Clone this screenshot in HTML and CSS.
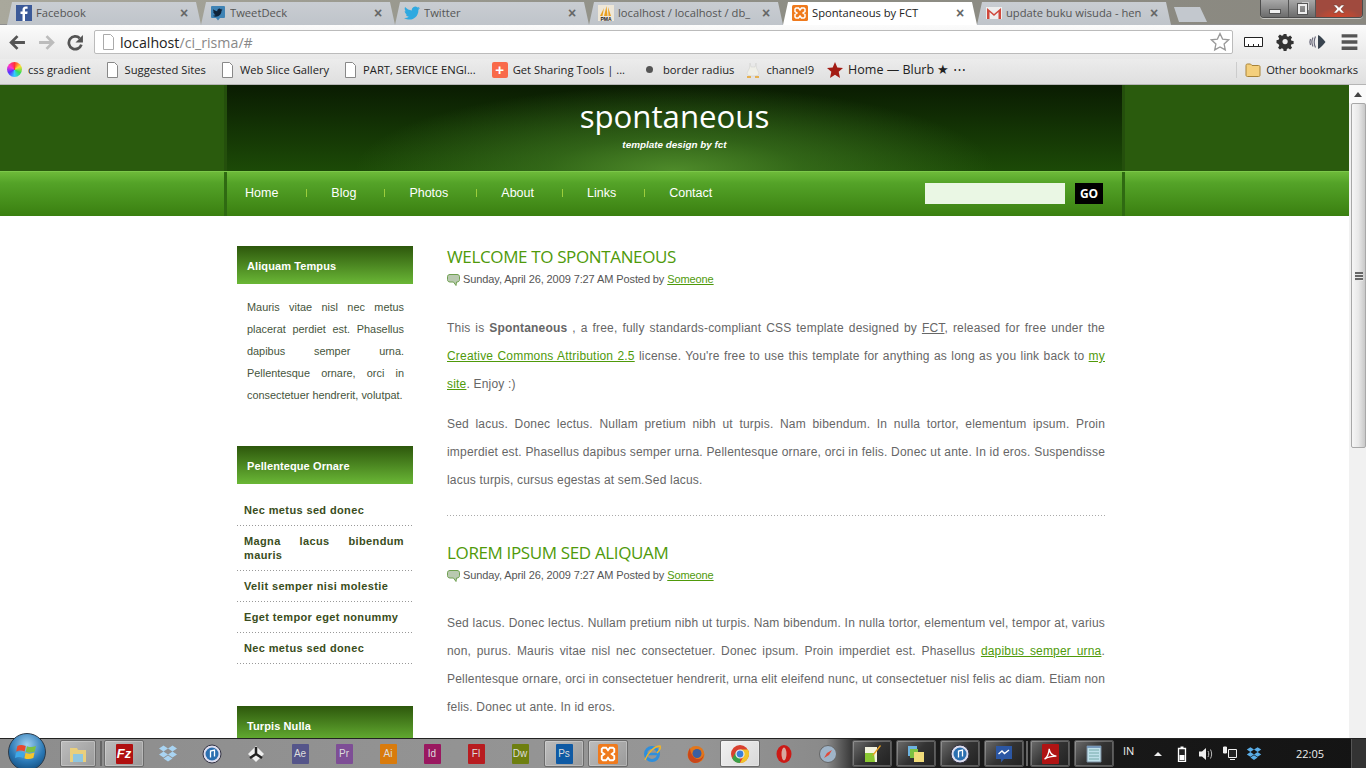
FILE: index.html
```html
<!DOCTYPE html>
<html lang="en">
<head>
    <meta charset="UTF-8">
    <title>Spontaneous by FCT</title>
    <link rel="stylesheet" href="styles.css">
</head>
<body>
<div class="screen">
    <div class="tabstrip">
        <div class="tab">
            <svg class="favicon" viewBox="0 0 16 16"><rect width="16" height="16" fill="#3b5998"/><path d="M9 16V9h2.300l.3-2.500H9V5c0-.8.300-1.200 1.200-1.200h1.400V1.500H9.800C7.500 1.500 6.500 2.800 6.500 4.700v1.800H4.500V9h2v7z" fill="#fff"/></svg>
            <span class="tab-title">Facebook</span><span class="tab-x">&#215;</span>
        </div>
        <div class="tab">
            <svg class="favicon" viewBox="0 0 16 16"><path d="M2 1h12a1 1 0 0 1 1 1v10a1 1 0 0 1-1 1h-4l-2 2.500L6 13H2a1 1 0 0 1-1-1V2a1 1 0 0 1 1-1z" fill="#3f83b5"/><path d="M12.500 4.500c-.5.200-.9.300-1.300.3.400-.3.700-.6.800-1-.4.200-.8.400-1.300.5A2 2 0 0 0 7.300 6.200C5.700 6.100 4.300 5.300 3.400 4.200c-.5.900-.2 2 .6 2.600-.3 0-.6-.1-.9-.2 0 1 .7 1.800 1.600 2-.3.100-.6.100-.9 0 .3.800 1 1.300 1.900 1.400-.9.600-2 .9-3 .8 3.900 2.200 8.800.1 8.800-5 .4-.3.800-.8 1-1.300z" fill="#10243a"/></svg>
            <span class="tab-title">TweetDeck</span><span class="tab-x">&#215;</span>
        </div>
        <div class="tab">
            <svg class="favicon" viewBox="0 0 16 16"><path d="M16 3c-.6.300-1.200.4-1.900.5.700-.4 1.200-1 1.400-1.800-.6.400-1.300.7-2 .8A3.300 3.300 0 0 0 7.900 5.500C5.200 5.400 2.800 4.100 1.100 2.100.3 3.600.7 5.500 2.200 6.500c-.5 0-1-.2-1.500-.4 0 1.600 1.100 3 2.600 3.300-.5.100-1 .1-1.500 0 .4 1.300 1.600 2.200 3.100 2.300A6.600 6.600 0 0 1 0 13c6.700 3.800 14.500.2 14.400-8.200.6-.5 1.200-1.100 1.600-1.800z" fill="#2fa9e0"/></svg>
            <span class="tab-title">Twitter</span><span class="tab-x">&#215;</span>
        </div>
        <div class="tab">
            <svg class="favicon" viewBox="0 0 16 16"><rect width="16" height="16" fill="#eee7d8"/><path d="M6 11 8.500 1l1 10zM10.500 11 10 2l3 9zM2 11l4-8-1.500 8z" fill="#e8a020"/><text class="pma" x="8" y="15.500">PMA</text></svg>
            <span class="tab-title">localhost / localhost / db_</span><span class="tab-x">&#215;</span>
        </div>
        <div class="tab tab-active">
            <svg class="favicon" viewBox="0 0 16 16"><rect width="16" height="16" rx="1.500" fill="#ef7a1d"/><path d="M4 3h2.500L8 5l1.500-2H12l1 1v2.500L11 8l2 1.500V12l-1 1H9.500L8 11l-1.500 2H4l-1-1V9.500L5 8 3 6.500V4z" fill="none" stroke="#fff" stroke-width="1.500"/></svg>
            <span class="tab-title">Spontaneous by FCT</span><span class="tab-x">&#215;</span>
        </div>
        <div class="tab">
            <svg class="favicon" viewBox="0 0 16 16"><rect y="2" width="16" height="12" fill="#eee"/><path d="M1 14V3l7 6 7-6v11h-2.500V7L8 11 3.500 7v7z" fill="#d0483c"/></svg>
            <span class="tab-title">update buku wisuda - hen</span><span class="tab-x">&#215;</span>
        </div>
        <div class="tab-new"></div>
        <div class="window-btns">
            <span class="win-btn win-min"><i></i></span>
            <span class="win-btn win-max"><i></i></span>
            <span class="win-btn win-close"><svg viewBox="0 0 14 10"><path d="M1.500 1h3L7 3.500 9.500 1h3L9 5l3.500 4h-3L7 6.500 4.500 9h-3L5 5z" fill="#fff" stroke="#6b3a30" stroke-width=".5"/></svg></span>
        </div>
    </div>

    <div class="toolbar">
        <svg class="tool-icon" viewBox="0 0 16 16"><path d="M8 2 2 8l6 6M2.500 8H15" fill="none" stroke="#555" stroke-width="2.600"/></svg>
        <svg class="tool-icon" viewBox="0 0 16 16"><path d="M8 2l6 6-6 6M13.500 8H1" fill="none" stroke="#bcbcbc" stroke-width="2.600"/></svg>
        <svg class="tool-icon" viewBox="0 0 16 16"><path d="M13.500 10A6 6 0 1 1 12 4" fill="none" stroke="#555" stroke-width="2.600"/><path d="M15 1v7H8z" fill="#555"/></svg>
        <div class="omnibox">
            <svg class="page-icon" viewBox="0 0 13 16"><path d="M1.500.5h7l3 3v12h-10z" fill="#fff" stroke="#aaa"/></svg>
            <span class="url"><span class="url-host">localhost</span>/ci_risma/#</span>
            <svg class="star" viewBox="0 0 20 20"><path d="M10 1.500l2.600 5.600 6 .7-4.500 4.100 1.200 6L10 15l-5.300 2.900 1.200-6L1.400 7.800l6-.7z" fill="#fff" stroke="#999" stroke-width="1.300"/></svg>
        </div>
        <div class="tool-right">
            <svg class="tool-icon" viewBox="0 0 19 18"><path d="M.5 4.500h18v9H.5z" fill="#fff" stroke="#222"/><path d="M4.500 13.500v-2.500M9.500 13.500v-2.500M14.500 13.500v-2.500" stroke="#222"/></svg>
            <svg class="tool-icon" viewBox="0 0 18 18"><path d="M7.500 1h3l.4 2.300 1.500.7 2-1.300 2 2-1.300 2 .7 1.500 2.200.3v3l-2.200.4-.7 1.500 1.300 2-2 2-2-1.300-1.500.7-.4 2.200h-3l-.4-2.200-1.500-.7-2 1.300-2-2 1.300-2-.7-1.500L0 10.500v-3l2.200-.3.700-1.500-1.300-2 2-2 2 1.300 1.500-.7z" fill="#333" transform="scale(.95)"/><circle cx="8.600" cy="8.600" r="2.600" fill="#eee"/></svg>
            <svg class="tool-icon" viewBox="0 0 18 18"><path d="M9.500 2c2.500 1 5 4 7.500 7-2.500 3-5 6-7.500 7z" fill="#39444f"/><path d="M7 3.500C5.300 7 5.300 11 7 14.500M4.500 4.500C3 7.500 3 10.500 4.500 13.500M2 6c-.8 2-.8 4 0 6" fill="none" stroke="#667" stroke-width="1.200"/></svg>
            <svg class="tool-icon" viewBox="0 0 16 16"><path d="M1 1h14v3H1zM1 6.500h14v3H1zM1 12h14v3H1z" fill="#555"/></svg>
        </div>
    </div>

    <div class="bookmarks">
        <span class="bm bm-m15"><span class="bm-wheel"></span>css gradient</span>
        <span class="bm bm-m15"><svg class="bm-page" viewBox="0 0 13 16"><path d="M1.500.5h7l3 3v12h-10z" fill="#fff" stroke="#888"/></svg>Suggested Sites</span>
        <span class="bm bm-m15"><svg class="bm-page" viewBox="0 0 13 16"><path d="M1.500.5h7l3 3v12h-10z" fill="#fff" stroke="#888"/></svg>Web Slice Gallery</span>
        <span class="bm bm-m16"><svg class="bm-page" viewBox="0 0 13 16"><path d="M1.500.5h7l3 3v12h-10z" fill="#fff" stroke="#888"/></svg>PART, SERVICE ENGI...</span>
        <span class="bm bm-gap"><span class="bm-plus">+</span>Get Sharing Tools | ...</span>
        <span class="bm bm-m11"><span class="bm-dot"></span>border radius</span>
        <span class="bm bm-m13"><svg class="bm-icon" viewBox="0 0 16 16"><path d="M5 1l1 4h4l1-4 .5 5L14 11c0 2-2 3-6 3s-6-1-6-3l2.500-5z" fill="#efefe8" stroke="#ccc" stroke-width=".5"/><path d="M2 15h4M10 15h4" stroke="#e8a020" stroke-width="1.500"/></svg>channel9</span>
        <span class="bm bm-home"><svg class="bm-icon" viewBox="0 0 16 16"><path d="M8 0l2.300 5.500 5.700.5-4.300 3.800L13 16l-5-3.200L3 16l1.300-6.200L0 6l5.700-.5z" fill="#a31c14"/></svg>Home — Blurb ★ ⋯</span>
        <span class="bm-other"><svg class="bm-icon" viewBox="0 0 16 16"><path d="M1 3.500c0-1 .5-1.500 1.500-1.500h3L7 3.500h6.500c1 0 1.500.5 1.500 1.500v8c0 1-.5 1.500-1.500 1.500h-11C1.500 14.500 1 14 1 13z" fill="#f4cf7c" stroke="#a88338"/></svg>Other bookmarks</span>
    </div>

    <div class="viewport">
        <div class="page">
            <div class="header">
                <div class="header-inner">
                    <h1 class="site-title">spontaneous</h1>
                    <p class="site-tag">template design by fct</p>
                </div>
            </div>
            <div class="navbar">
                <div class="navbar-inner">
                    <ul class="menu">
                        <li><a href="#">Home</a></li>
                        <li><a href="#">Blog</a></li>
                        <li><a href="#">Photos</a></li>
                        <li><a href="#">About</a></li>
                        <li><a href="#">Links</a></li>
                        <li><a href="#">Contact</a></li>
                    </ul>
                    <form class="search">
                        <input type="text" class="search-box">
                        <button type="button" class="search-go">GO</button>
                    </form>
                </div>
            </div>
            <div class="content">
                <div class="sidebar">
                    <div class="side-block">
                        <h3 class="side-head">Aliquam Tempus</h3>
                        <p class="side-text">Mauris vitae nisl nec metus placerat perdiet est. Phasellus dapibus semper urna. Pellentesque ornare, orci in consectetuer hendrerit, volutpat.</p>
                    </div>
                    <div class="side-block">
                        <h3 class="side-head">Pellenteque Ornare</h3>
                        <ul class="side-list">
                            <li>Nec metus sed donec</li>
                            <li>Magna lacus bibendum mauris</li>
                            <li>Velit semper nisi molestie</li>
                            <li>Eget tempor eget nonummy</li>
                            <li>Nec metus sed donec</li>
                        </ul>
                    </div>
                    <div class="side-block">
                        <h3 class="side-head">Turpis Nulla</h3>
                    </div>
                </div>
                <div class="main">
                    <div class="post post-first">
                        <h2 class="post-title">Welcome to Spontaneous</h2>
                        <p class="post-meta"><svg class="bubble" viewBox="0 0 13 12"><path d="M3 .5h7c1.500 0 2.500.8 2.500 2.200v3c0 1.400-1 2.300-2.500 2.300H9.500L9 11.500 6.500 8H3C1.500 8 .5 7.100.5 5.700v-3C.5 1.300 1.500.5 3 .5z" fill="#b9c9b0" stroke="#6fa050"/></svg>Sunday, April 26, 2009 7:27 AM Posted by <a href="#">Someone</a></p>
                        <p class="post-text">This is <strong>Spontaneous</strong> , a free, fully standards-compliant CSS template designed by <a href="#" class="grey-link">FCT</a>, released for free under the <a href="#">Creative Commons Attribution 2.5</a> license. You're free to use this template for anything as long as you link back to <a href="#">my site</a>. Enjoy :)</p>
                        <p class="post-text">Sed lacus. Donec lectus. Nullam pretium nibh ut turpis. Nam bibendum. In nulla tortor, elementum ipsum. Proin imperdiet est. Phasellus dapibus semper urna. Pellentesque ornare, orci in felis. Donec ut ante. In id eros. Suspendisse lacus turpis, cursus egestas at sem.Sed lacus.</p>
                    </div>
                    <div class="post">
                        <h2 class="post-title">Lorem ipsum sed aliquam</h2>
                        <p class="post-meta"><svg class="bubble" viewBox="0 0 13 12"><path d="M3 .5h7c1.500 0 2.500.8 2.500 2.200v3c0 1.400-1 2.300-2.500 2.300H9.500L9 11.500 6.500 8H3C1.500 8 .5 7.100.5 5.700v-3C.5 1.300 1.500.5 3 .5z" fill="#b9c9b0" stroke="#6fa050"/></svg>Sunday, April 26, 2009 7:27 AM Posted by <a href="#">Someone</a></p>
                        <p class="post-text">Sed lacus. Donec lectus. Nullam pretium nibh ut turpis. Nam bibendum. In nulla tortor, elementum vel, tempor at, varius non, purus. Mauris vitae nisl nec consectetuer. Donec ipsum. Proin imperdiet est. Phasellus <a href="#">dapibus semper urna</a>. Pellentesque ornare, orci in consectetuer hendrerit, urna elit eleifend nunc, ut consectetuer nisl felis ac diam. Etiam non felis. Donec ut ante. In id eros.</p>
                    </div>
                </div>
            </div>
        </div>
        <div class="scrollbar">
            <span class="scroll-up"></span>
            <span class="scroll-thumb"><span class="scroll-grip"></span></span>
        </div>
    </div>

    <div class="taskbar">
        <span class="orb"><svg viewBox="0 0 20 20"><path d="M2 5c2-1 4-1 7 0l-1 4.500c-2.500-1-4.500-1-7 0z" fill="#e8492f"/><path d="M10 5.200c2.500 1 4.500 1 7.500-.2l-1 4.500c-3 1.200-5 1.200-7.500.2z" fill="#7cc142"/><path d="M.8 10.500c2.500-1 4.500-1 7 0L7 15c-2.500-1-4.500-1-7 0z" fill="#3fa8e8"/><path d="M8.800 10.700c2.500 1 4.500 1 7.500-.2l-1 4.500c-3 1.200-5 1.200-7.500.2z" fill="#f5c62c"/></svg></span>
        <span class="task task-open task-narrow"><svg class="task-icon" viewBox="0 0 20 20"><path d="M2 4h7l1 2h8v12H2z" fill="#e9cf7d"/><path d="M5 10h10v8H5z" fill="#8fc6e0"/></svg></span>
        <span class="task-sep"></span>
        <span class="task task-open"><span class="app-tile tile-fz">Fz</span></span>
        <span class="task"><svg class="task-icon" viewBox="0 0 20 20"><path d="M5.500 1.500 10 4.500l-4.500 3L1 4.500zM14.500 1.500 19 4.500l-4.500 3-4.500-3zM5.500 7.500l4.500 3-4.500 3-4.500-3zM14.500 7.500l4.500 3-4.500 3-4.500-3zM5.500 14.500 10 11.500l4.500 3-4.500 3z" fill="#a9d4f2"/></svg></span>
        <span class="task"><svg class="task-icon" viewBox="0 0 20 20"><circle cx="10" cy="10" r="9" fill="#dde" stroke="#334"/><circle cx="10" cy="10" r="6.500" fill="#2a6fb0"/><path d="M8.500 13.500V7l4-1v6.500" fill="none" stroke="#fff" stroke-width="1.300"/></svg></span>
        <span class="task"><svg class="task-icon" viewBox="0 0 20 20"><path d="M10 2l8 8-8 8-8-8z" fill="#eee"/><path d="M10 10V3M10 10l-6 4M10 10l6 4" stroke="#222" stroke-width="2.500"/></svg></span>
        <span class="task"><span class="app-tile tile-ae">Ae</span></span>
        <span class="task"><span class="app-tile tile-pr">Pr</span></span>
        <span class="task"><span class="app-tile tile-ai">Ai</span></span>
        <span class="task"><span class="app-tile tile-id">Id</span></span>
        <span class="task"><span class="app-tile tile-fl">Fl</span></span>
        <span class="task"><span class="app-tile tile-dw">Dw</span></span>
        <span class="task task-open"><span class="app-tile tile-ps">Ps</span></span>
        <span class="task task-open"><svg class="task-icon" viewBox="0 0 16 16"><rect width="16" height="16" rx="1.500" fill="#ef7a1d"/><path d="M4 3h2.500L8 5l1.500-2H12l1 1v2.500L11 8l2 1.500V12l-1 1H9.500L8 11l-1.500 2H4l-1-1V9.500L5 8 3 6.500V4z" fill="none" stroke="#fff" stroke-width="1.500"/></svg></span>
        <span class="task"><svg class="task-icon" viewBox="0 0 20 20"><circle cx="10" cy="10" r="6.500" fill="none" stroke="#2f8fdc" stroke-width="3"/><path d="M4 10h12" stroke="#2f8fdc" stroke-width="2.500"/><path d="M3 16C6 8 13 2 18 2c1 2-1 5-3 7" fill="none" stroke="#f0b429" stroke-width="1.500"/></svg></span>
        <span class="task"><svg class="task-icon" viewBox="0 0 20 20"><circle cx="10" cy="10.500" r="8.500" fill="#e2761b"/><circle cx="11" cy="9.500" r="4.500" fill="#3a5fa0"/><path d="M4 4c0 4 3 11 8 11 3 0 5-2 6-5-1 6-5 9-9 9-4 0-7-4-7-8 0-3 1-5 2-7z" fill="#c9461a"/></svg></span>
        <span class="task task-light"><svg class="task-icon" viewBox="0 0 20 20"><circle cx="10" cy="10" r="9" fill="#d9402f"/><path d="M10 19a9 9 0 0 1-7.800-4.500L6.500 7l3.500 6z" fill="#3aa048"/><path d="M10 19a9 9 0 0 0 7.800-13.500H10l3.500 7z" fill="#f2c32a"/><circle cx="10" cy="10" r="4" fill="#3b7fd9" stroke="#eee" stroke-width="1.200"/></svg></span>
        <span class="task"><svg class="task-icon" viewBox="0 0 20 20"><ellipse cx="10" cy="10" rx="7.500" ry="9" fill="#cc1a16"/><ellipse cx="10" cy="10" rx="2.500" ry="6.500" fill="#d8a8a0"/></svg></span>
        <span class="task"><svg class="task-icon" viewBox="0 0 20 20"><circle cx="10" cy="10" r="8.500" fill="#9fb4c8" stroke="#666"/><path d="M14 6 11 11 6 14l3-5z" fill="#e04a3a"/></svg></span>
        <span class="task task-dark"><svg class="task-icon" viewBox="0 0 20 20"><path d="M3 3h12v15H3z" fill="#f4f4e0"/><path d="M3 9h9l1 9H3z" fill="#8ac832"/><path d="M18 1l1 1-7 9-2 1 1-2z" fill="#e8a020"/></svg></span>
        <span class="task task-dark"><svg class="task-icon" viewBox="0 0 20 20"><path d="M2 2h9v10H2z" fill="#6db3e0"/><path d="M4 5h8v9H4z" fill="#7cc142"/><path d="M8 8h10v10H8z" fill="#f1dc7a"/></svg></span>
        <span class="task task-dark"><svg class="task-icon" viewBox="0 0 20 20"><circle cx="10" cy="10" r="9" fill="#dde" stroke="#334"/><circle cx="10" cy="10" r="6.500" fill="#2a6fb0"/><path d="M8.500 13.500V7l4-1v6.500" fill="none" stroke="#fff" stroke-width="1.300"/></svg></span>
        <span class="task task-dark"><svg class="task-icon" viewBox="0 0 20 20"><path d="M2 2h16v13h-8l-3 3.500V15H2z" fill="#2c57a4"/><path d="M4.500 10 8 7l2.500 2.500L15 6" fill="none" stroke="#fff" stroke-width="1.400"/></svg></span>
        <span class="task-sep"></span>
        <span class="task task-dark"><span class="app-tile tile-pdf"><svg viewBox="0 0 20 20"><path d="M3 16c3-2 5-7 5.500-12 .5 5 3 8 8.500 8.500-5 0-10 1-14 3.500z" fill="none" stroke="#fff" stroke-width="1.500"/></svg></span></span>
        <span class="task task-dark"><svg class="task-icon" viewBox="0 0 20 20"><path d="M3 2h14v16H3z" fill="#bfe0ea" stroke="#789"/><path d="M5 6h10M5 9h10M5 12h10M5 15h10" stroke="#7aa"/><path d="M3 2h14v2H3z" fill="#79b"/></svg></span>
        <div class="tray">
            <span class="tray-lang">IN</span>
            <span class="tray-arrow"></span>
            <svg class="tray-icon" viewBox="0 0 16 16"><path d="M4.500 2.500h7v13h-7z" fill="#222" stroke="#fff" stroke-width="1.300"/><path d="M5.500 9h5v5h-5z" fill="#fff"/><path d="M6.500 .5h3v2h-3z" fill="#fff"/></svg>
            <svg class="tray-icon" viewBox="0 0 16 16"><path d="M1 5.500h3L8 2v12l-4-3.500H1z" fill="#eee"/><path d="M10 5c1 2 1 4 0 6M12.500 3.500c1.500 3 1.500 6 0 9" fill="none" stroke="#bbb"/></svg>
            <svg class="tray-icon" viewBox="0 0 16 16"><path d="M6.500 3.500h8v8h-8z" fill="#222" stroke="#eee"/><path d="M1.500 1h3v6h-3zM8 13.500h5" stroke="#eee" fill="#eee"/></svg>
            <svg class="tray-icon" viewBox="0 0 20 20"><path d="M5.500 1.500 10 4.500l-4.500 3L1 4.500zM14.500 1.500 19 4.500l-4.500 3-4.500-3zM5.500 7.500l4.500 3-4.500 3-4.500-3zM14.500 7.500l4.500 3-4.500 3-4.500-3zM5.500 14.500 10 11.500l4.500 3-4.500 3z" fill="#5aaee8"/></svg>
            <span class="tray-clock">22:05</span>
            <span class="show-desktop"></span>
        </div>
    </div>
</div>
</body>
</html>
```

FILE: styles.css
```css
* {
    box-sizing: border-box;
}
html, body {
    margin: 0;
    padding: 0;
    overflow: hidden;
}
.screen {
    width: 1366px;
    height: 768px;
    display: flex;
    flex-direction: column;
    overflow: hidden;
    font-family: "Open Sans", "Noto Sans", sans-serif;
}

/* browser tabs */
.tabstrip {
    height: 25px;
    flex: none;
    display: flex;
    align-items: flex-end;
    padding-left: 7px;
    background: linear-gradient(90deg, #a9a89c, #8f8f86 50%, #8a8880);
    border-bottom: 1px solid #8f8f8f;
}
.tab {
    width: 194px;
    height: 23px;
    margin-bottom: -1px;
    display: flex;
    align-items: center;
    padding: 0 10px 2px 9px;
    background: linear-gradient(#c9cdd2, #bfc4ca);
    clip-path: polygon(0 100%, 5px 0, calc(100% - 5px) 0, 100% 100%);
    font-size: 11.2px;
    color: #555;
    overflow: hidden;
}
.tab-active {
    background: #fff;
    color: #222;
}
.favicon {
    width: 16px;
    height: 16px;
    flex: none;
    margin-right: 4px;
}
.pma {
    font: bold 5px "Liberation Sans", sans-serif;
    text-anchor: middle;
    fill: #222;
}
.tab-title {
    flex: 1;
    white-space: nowrap;
    overflow: hidden;
}
.tab-x {
    width: 14px;
    flex: none;
    font: bold 14px "Liberation Sans", sans-serif;
    color: #666;
    text-align: center;
}
.tab-new {
    width: 33px;
    height: 15px;
    margin: 0 0 2px 3px;
    background: #c3c8ce;
    clip-path: polygon(5px 100%, 0 0, 26px 0, 33px 100%);
}
.window-btns {
    margin-left: auto;
    margin-right: 3px;
    align-self: flex-start;
    display: flex;
    width: 103px;
    height: 18px;
    border: 1px solid #4c4c4c;
    border-top: 0;
    border-radius: 0 0 4px 4px;
    box-shadow: 0 1px 0 rgba(255, 255, 255, .5);
    overflow: hidden;
}
.win-btn {
    display: flex;
    align-items: center;
    justify-content: center;
    background: linear-gradient(#a8a8a8, #8a8a8a 50%, #6c6c6c);
    border-right: 1px solid #555;
}
.win-min {
    width: 28px;
}
.win-max {
    width: 27px;
}
.win-min i {
    width: 12px;
    height: 5px;
    margin-top: 6px;
    background: #f0f0f0;
    border: 1px solid #555;
}
.win-max i {
    width: 9px;
    height: 10px;
    border: 2px solid #eee;
    outline: 1px solid #555;
    box-shadow: 3px -3px 0 -1px #ccc;
}
.win-close {
    flex: 1;
    border: 0;
    background: radial-gradient(ellipse 22px 9px at 50% 100%, #d0452c, #b24a38 70%, #a04a3e);
}
.win-close svg {
    width: 14px;
    height: 10px;
}

/* address bar */
.toolbar {
    height: 34px;
    flex: none;
    display: flex;
    align-items: center;
    padding: 0 6px 0 9px;
    background: linear-gradient(#fbfbfb, #e8e8e8);
}
.tool-icon {
    width: 17px;
    height: 17px;
    flex: none;
    margin-right: 12px;
}
.omnibox {
    width: 1139px;
    height: 24px;
    margin-left: -2px;
    display: flex;
    align-items: center;
    padding: 0 2px 0 7px;
    background: #fff;
    border: 1px solid #bbb;
    border-radius: 2px;
}
.page-icon {
    width: 13px;
    height: 16px;
    margin-right: 5px;
}
.url {
    flex: 1;
    font-size: 14.2px;
    color: #888;
}
.url-host {
    color: #222;
}
.star {
    width: 20px;
    height: 20px;
}
.tool-right {
    display: flex;
    margin-left: 11px;
    align-items: center;
}
.tool-right .tool-icon {
    width: 19px;
    height: 18px;
    margin-right: 13px;
}
.tool-right .tool-icon:last-child {
    margin-right: 0;
}

/* bookmarks */
.bookmarks {
    height: 26px;
    flex: none;
    display: flex;
    align-items: center;
    padding: 0 0 4px 7px;
    background: linear-gradient(#ececec, #dfdfdf);
    border-bottom: 1px solid #b5b5b5;
    font-size: 11.2px;
    color: #222;
}
.bm {
    display: flex;
    align-items: center;
    white-space: nowrap;
}
.bm-m15 {
    margin-right: 15px;
}
.bm-m16 {
    margin-right: 16px;
}
.bm-m11 {
    margin-right: 11px;
}
.bm-m13 {
    margin-right: 13px;
}
.bm-gap {
    margin-right: 21px;
}
.bm-wheel {
    width: 15px;
    height: 15px;
    margin-right: 6px;
    border-radius: 50%;
    background: conic-gradient(#f33, #fd3, #3d5, #3cf, #53f, #f3c, #f33);
}
.bm-page {
    width: 13px;
    height: 16px;
    margin-right: 6px;
}
.bm-plus {
    width: 16px;
    height: 16px;
    margin-right: 5px;
    border-radius: 2px;
    background: #f96a4a;
    color: #fff;
    font: bold 15px/16px "Liberation Sans", sans-serif;
    text-align: center;
}
.bm-dot {
    width: 7px;
    height: 7px;
    margin: 0 10px 0 0;
    border-radius: 50%;
    background: #555;
}
.bm-icon {
    width: 16px;
    height: 16px;
    margin-right: 5px;
    flex: none;
}
.bm-home {
    font-size: 12.500px;
}
.bm-other {
    margin-left: auto;
    padding: 0 8px 0 8px;
    display: flex;
    align-items: center;
    border-left: 1px solid #ccc;
}

/* page */
.viewport {
    height: 653px;
    flex: none;
    display: flex;
    overflow: hidden;
}
.page {
    width: 1349px;
    flex: none;
    background: #fff;
    font-family: "Liberation Sans", Arial, sans-serif;
}
.header {
    height: 86px;
    background: #2a5b0d;
}
.header-inner {
    width: 901px;
    height: 86px;
    margin-left: 224px;
    padding-top: 13px;
    text-align: center;
    background:
        radial-gradient(ellipse 320px 85px at 50% 100%, rgba(84, 146, 46, .9), rgba(70, 130, 38, .55) 40%, rgba(60, 120, 30, 0)),
        linear-gradient(#0a1c02, #1c4a07);
    background-clip: padding-box;
    border-left: 3px solid #244f0c;
    border-right: 3px solid #244f0c;
}
.site-title {
    margin: 0;
    font: normal 31.2px/36px "Open Sans", "Noto Sans", sans-serif;
    color: #fff;
}
.site-tag {
    margin: 4px 0 0;
    font: italic bold 9.9px/14px "Liberation Sans", sans-serif;
    color: #fff;
}
.navbar {
    height: 45px;
    background: linear-gradient(#6dba39, #54a328 25%, #3a7f10);
    border-top: 1px solid #7cc84a;
}
.navbar-inner {
    width: 901px;
    height: 44px;
    margin-left: 224px;
    padding-bottom: 2px;
    display: flex;
    align-items: center;
    border-left: 3px solid #2f6a12;
    border-right: 3px solid #2f6a12;
}
.menu {
    display: flex;
    margin: 0;
    padding: 0 0 0 18px;
    list-style: none;
}
.menu li {
    padding-right: 29px;
    margin-right: 24px;
    position: relative;
}
.menu li::after {
    content: "";
    position: absolute;
    right: 0;
    top: 3px;
    width: 1px;
    height: 8px;
    background: #9cce3c;
}
.menu li:last-child::after {
    display: none;
}
.menu a {
    color: #fff;
    font-size: 12.500px;
    line-height: 15px;
    text-decoration: none;
    display: block;
}
.search {
    margin: 0 19px 0 auto;
    display: flex;
    gap: 10px;
}
.search-box {
    width: 140px;
    height: 21px;
    padding: 0;
    border: 0;
    background: #eaf7e4;
}
.search-go {
    width: 28px;
    height: 21px;
    padding: 0;
    border: 0;
    background: #000;
    color: #fff;
    font: bold 12px "Open Sans", sans-serif;
}
.content {
    width: 898px;
    margin-left: 227px;
    display: flex;
    padding: 30px 20px 0 10px;
}
.sidebar {
    width: 176px;
    flex: none;
    margin-right: 34px;
}
.side-block {
    margin-bottom: 40px;
}
.side-head {
    height: 38px;
    margin: 0;
    padding-left: 10px;
    font-size: 11px;
    letter-spacing: .1px;
    line-height: 40px;
    color: #fff;
    background: linear-gradient(#2d570c, #6ab736);
}
.side-text {
    margin: 12px 0 0;
    padding: 0 9px 0 10px;
    font-size: 10.9px;
    line-height: 22px;
    color: #46553c;
    text-align: justify;
}
.side-list {
    margin: 11px 0 0;
    padding: 0 0 2px;
    list-style: none;
}
.side-list li {
    padding: 8px 9px 9px 7px;
    font-size: 11px;
    letter-spacing: .37px;
    font-weight: bold;
    line-height: 14px;
    color: #3a4d20;
    text-align: justify;
    background: linear-gradient(90deg, #999 1px, transparent 1px) 0 100% / 3px 1px repeat-x;
}
.main {
    flex: 1;
}
.post-first {
    padding-bottom: 10px;
    margin-bottom: 26px;
    background: linear-gradient(90deg, #aaa 1px, transparent 1px) 0 100% / 3px 1px repeat-x;
}
.post-title {
    margin: -1px 0 0;
    font: normal 17px/24px "Open Sans", "Noto Sans", sans-serif;
    letter-spacing: -.36px;
    color: #4f9a0a;
    text-transform: uppercase;
}
.post-meta {
    margin: 2px 0 26px;
    font-size: 11px;
    letter-spacing: -.1px;
    line-height: 16px;
    color: #555;
}
.post-first .post-meta {
    margin-bottom: 27px;
}
.post-meta a {
    color: #4f9a0a;
}
.bubble {
    width: 13px;
    height: 12px;
    margin-right: 3px;
    vertical-align: -3px;
}
.post-text {
    margin: 0 0 12px;
    font-size: 12px;
    letter-spacing: .19px;
    line-height: 28px;
    color: #666;
    text-align: justify;
}
.post-text a {
    color: #4f9a0a;
}
.post-text .grey-link {
    color: #666;
}

/* page scrollbar */
.scrollbar {
    width: 17px;
    flex: none;
    background: #f1f1f1;
    display: flex;
    flex-direction: column;
    align-items: flex-end;
}
.scroll-up {
    width: 100%;
    height: 18px;
    flex: none;
    position: relative;
    background: #fafafa;
}
.scroll-up::after {
    content: "";
    position: absolute;
    left: 5px;
    top: 7px;
    border: 4px solid transparent;
    border-top: 0;
    border-bottom: 5px solid #444;
}
.scroll-thumb {
    width: 15px;
    height: 345px;
    flex: none;
    display: flex;
    align-items: flex-start;
    justify-content: center;
    padding-top: 168px;
    border: 1px solid #a8a8a8;
    border-radius: 2px;
    background: linear-gradient(90deg, #f6f6f6, #e8e8e8 50%, #c8c8c8);
}
.scroll-grip {
    width: 8px;
    height: 9px;
    background: repeating-linear-gradient(#666 0 2px, #e8e8e8 2px 3px);
}

/* windows taskbar */
.taskbar {
    height: 30px;
    flex: none;
    display: flex;
    align-items: center;
    background: linear-gradient(90deg, #8d8d8d, #969696 50%, #8a8a8a 60.500%, #1c1c1c 63%, #141414);
    border-top: 1px solid #222;
}
.orb {
    width: 38px;
    height: 38px;
    margin: -4px 10px 0 8px;
    flex: none;
    display: flex;
    align-items: center;
    justify-content: center;
    border-radius: 50%;
    background: radial-gradient(circle at 50% 30%, #9fd0f0, #2a78b5 55%, #0c3c66);
    border: 1px solid #2a3a4a;
}
.orb svg {
    width: 24px;
    height: 24px;
}
.task {
    width: 44px;
    height: 29px;
    flex: none;
    display: flex;
    align-items: center;
    justify-content: center;
    position: relative;
    z-index: 0;
}
.task-open::before,
.task-dark::before,
.task-light::before {
    content: "";
    position: absolute;
    left: 2px;
    right: 2px;
    top: 1px;
    bottom: 1px;
    z-index: -1;
    border: 1px solid #6c6c6c;
    border-radius: 2px;
    background: linear-gradient(135deg, #bdbdbd, #9a9a9a);
    box-shadow: inset 0 0 0 1px rgba(255, 255, 255, .25);
}
.task-narrow::before {
    left: 4px;
    right: 4px;
}
.task-light::before {
    background: linear-gradient(135deg, #f2f2f2, #d8d8d8);
}
.task-dark::before {
    background: linear-gradient(135deg, #6d6d6d, #333 50%, #222);
    border-color: #555;
}
.task-sep {
    width: 2px;
    height: 25px;
    flex: none;
    background: #666;
}
.task-icon {
    width: 20px;
    height: 20px;
}
.app-tile {
    width: 17px;
    height: 20px;
    display: block;
    font: 10px/20px "Liberation Sans", sans-serif;
    text-align: center;
    border-radius: 1px;
    color: #ddd;
}
.app-tile svg {
    width: 17px;
    height: 20px;
    display: block;
}
.tile-fz {
    background: #b01010;
    color: #fff;
    font: italic bold 13px/20px "Liberation Sans", sans-serif;
}
.tile-ae { background: #55558a; }
.tile-pr { background: #7e4e96; }
.tile-ai { background: #d97b0c; }
.tile-id { background: #9a1860; }
.tile-fl { background: #b81c20; }
.tile-dw { background: #6e7f10; }
.tile-ps { background: #0f5aa4; }
.tile-pdf { background: #b01414; }
.tray {
    flex: 1;
    display: flex;
    align-items: center;
    color: #eee;
    font-size: 11px;
    padding-left: 7px;
}
.tray-lang {
    width: 31px;
    margin-top: -6px;
}
.tray-arrow {
    width: 0;
    height: 0;
    margin-right: 12px;
    border: 4px solid transparent;
    border-top: 0;
    border-bottom: 4px solid #eee;
}
.tray-icon {
    width: 16px;
    height: 16px;
    flex: none;
    margin-right: 8px;
}
.tray-clock {
    margin-left: 26px;
    width: 40px;
}
.show-desktop {
    width: 15px;
    height: 29px;
    margin-left: auto;
    background: #333;
    border-left: 1px solid #555;
}
```
